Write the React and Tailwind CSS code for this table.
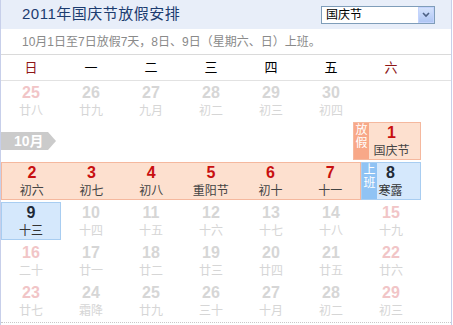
import React from "react";

const FONT = { fontFamily: '"Liberation Sans","Noto Sans CJK SC",sans-serif' };

function Plain({ n, l, weekend }) {
  return (
    <div className="w-[60px] flex flex-col items-center pt-[2px]">
      <span className={`text-[16px] leading-[19px] font-bold ${weekend ? "text-[#f1c5c7]" : "text-[#d6d6d6]"}`}>{n}</span>
      <span className="text-[12px] leading-[16px] mt-[1px] text-[#d6d6d6]">{l}</span>
    </div>
  );
}

function Empty() {
  return <div className="w-[60px]" />;
}

function BandCell({ n, l }) {
  return (
    <div className="flex-1 flex flex-col items-center">
      <span className="text-[16px] leading-[19px] font-bold text-[#c80f0f]">{n}</span>
      <span className="text-[12px] leading-[16px] mt-[1px] text-[#444]">{l}</span>
    </div>
  );
}

export default function App() {
  const row1 = [
    ["25", "廿八", true],
    ["26", "廿九"],
    ["27", "九月"],
    ["28", "初二"],
    ["29", "初三"],
    ["30", "初四"],
  ];
  const band = [
    ["2", "初六"],
    ["3", "初七"],
    ["4", "初八"],
    ["5", "重阳节"],
    ["6", "初十"],
    ["7", "十一"],
  ];
  const row4 = [
    ["10", "十四"],
    ["11", "十五"],
    ["12", "十六"],
    ["13", "十七"],
    ["14", "十八"],
    ["15", "十九", true],
  ];
  const row5 = [
    ["16", "二十", true],
    ["17", "廿一"],
    ["18", "廿二"],
    ["19", "廿三"],
    ["20", "廿四"],
    ["21", "廿五"],
    ["22", "廿六", true],
  ];
  const row6 = [
    ["23", "廿七", true],
    ["24", "霜降"],
    ["25", "廿九"],
    ["26", "三十"],
    ["27", "十月"],
    ["28", "初二"],
    ["29", "初三", true],
  ];
  const weekdays = [
    ["日", true],
    ["一"],
    ["二"],
    ["三"],
    ["四"],
    ["五"],
    ["六", true],
  ];

  return (
    <div style={FONT} className="w-[452px] h-[325px] bg-white border-x border-[#c7cfea] overflow-hidden">
      {/* header */}
      <div className="h-[29px] bg-[#e8eef9] flex items-center justify-between pl-[21px] pr-[16px]">
        <span className="text-[15px] tracking-[0.5px] text-[#1c3c70]">2011年国庆节放假安排</span>
        <div className="w-[114px] h-[18px] border border-[#7f9db9] bg-white flex items-center justify-between">
          <span className="text-[12px] leading-[16px] text-black pl-[4px]">国庆节</span>
          <div className="w-[16px] h-[16px] bg-gradient-to-b from-[#d4e2fc] to-[#afc6f4] border border-[#c3d3fd] flex items-center justify-center">
            <svg width="8" height="6" viewBox="0 0 8 6">
              <path d="M1 1 L4 4 L7 1" fill="none" stroke="#4d6185" strokeWidth="1.6" />
            </svg>
          </div>
        </div>
      </div>

      {/* subtitle */}
      <div className="h-[26px] border-b border-[#dadada] flex items-center pl-[21px]">
        <span className="text-[12px] text-[#8a8a8a]">10月1日至7日放假7天，8日、9日（星期六、日）上班。</span>
      </div>

      {/* weekdays */}
      <div className="h-[26px] border-b border-[#e2e2e2] flex items-center">
        {weekdays.map(([w, red], i) => (
          <div key={i} className={`w-[60px] text-center text-[13px] ${red ? "text-[#8e1616]" : "text-black"}`}>{w}</div>
        ))}
      </div>

      {/* rows */}
      <div className="w-[420px]">
        <div className="flex h-[40px]">
          {row1.map(([n, l, w], i) => (
            <Plain key={i} n={n} l={l} weekend={w} />
          ))}
          <Empty />
        </div>

        <div className="flex h-[40px] items-start">
          <div className="mt-[11px] flex items-center">
            <div className="h-[18px] w-[47px] bg-[#cbcbcb] flex items-center pl-[13px]">
              <span className="text-[14px] leading-[18px] font-bold text-white">10月</span>
            </div>
            <div className="w-0 h-0 border-y-[9px] border-y-transparent border-l-[8px] border-l-[#cbcbcb]" />
          </div>
          <div className="ml-auto mt-[1px] h-[38px] w-[68px] flex border border-[#f5b89e] bg-[#fde0cf]">
            <div className="w-[15px] shrink-0 bg-[#f8a888] text-white text-[12px] leading-[13px] flex flex-col items-center pt-[1px]">
              <span>放</span>
              <span>假</span>
            </div>
            <div className="flex-1 flex flex-col items-center pr-[6px]">
              <span className="text-[16px] leading-[19px] font-bold text-[#c80f0f]">1</span>
              <span className="text-[12px] leading-[16px] mt-[1px] text-[#444]">国庆节</span>
            </div>
          </div>
        </div>

        <div className="flex h-[40px] items-start">
          <div className="mt-[1px] h-[38px] w-[360px] flex border border-[#f5b89e] bg-[#fde0cf]">
            {band.map(([n, l], i) => (
              <BandCell key={i} n={n} l={l} />
            ))}
          </div>
          <div className="mt-[1px] h-[38px] w-[60px] flex border border-[#a8cdf1] bg-[#d5e8fc]">
            <div className="w-[15px] shrink-0 bg-[#90c3f4] text-white text-[12px] leading-[13px] flex flex-col items-center pt-[1px]">
              <span>上</span>
              <span>班</span>
            </div>
            <div className="flex-1 flex flex-col items-center pr-[16px]">
              <span className="text-[16px] leading-[19px] font-bold text-[#1f2a36]">8</span>
              <span className="text-[12px] leading-[16px] mt-[1px] text-[#333]">寒露</span>
            </div>
          </div>
        </div>

        <div className="flex h-[40px] items-start">
          <div className="mt-[1px] h-[38px] w-[60px] flex flex-col items-center border border-[#a8cdf1] bg-[#d5e8fc]">
            <span className="text-[16px] leading-[19px] font-bold text-[#1f2a36]">9</span>
            <span className="text-[12px] leading-[16px] mt-[1px] text-[#333]">十三</span>
          </div>
          {row4.map(([n, l, w], i) => (
            <Plain key={i} n={n} l={l} weekend={w} />
          ))}
        </div>

        <div className="flex h-[40px]">
          {row5.map(([n, l, w], i) => (
            <Plain key={i} n={n} l={l} weekend={w} />
          ))}
        </div>

        <div className="flex h-[40px]">
          {row6.map(([n, l, w], i) => (
            <Plain key={i} n={n} l={l} weekend={w} />
          ))}
        </div>
      </div>

      <div className="mt-[1px] border-b border-dotted border-[#c8c8c8]" />
    </div>
  );
}
